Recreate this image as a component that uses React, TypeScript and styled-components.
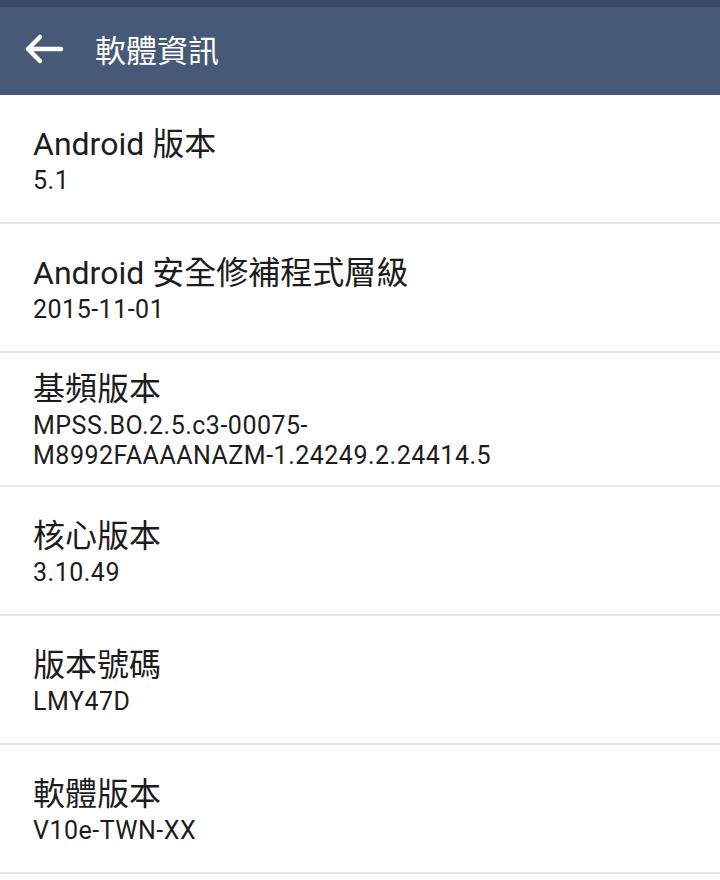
import React from "react";
import styled, { createGlobalStyle } from "styled-components";

const Global = createGlobalStyle`
  html, body { margin: 0; padding: 0; background: #ffffff; }
  body { font-family: Roboto, "Noto Sans CJK TC", sans-serif; }
`;

const Screen = styled.div`
  width: 720px;
  min-height: 880px;
  background: #ffffff;
  display: flex;
  flex-direction: column;
`;

const StatusStrip = styled.div`
  height: 7px;
  background: #3c4b63;
`;

const Toolbar = styled.header`
  height: 88px;
  background: #465977;
  display: flex;
  align-items: center;
  padding-left: 24px;
  padding-bottom: 5px;
  gap: 31px;
  box-sizing: border-box;
`;

const BackButton = styled.div`
  width: 40px;
  height: 40px;
  display: flex;
  align-items: center;
  justify-content: center;
`;

const ToolbarTitle = styled.h1`
  margin: 0;
  font-family: Roboto, "Noto Sans CJK TC", sans-serif;
  font-weight: 400;
  font-size: 31px;
  color: #ffffff;
`;

const List = styled.div`
  display: flex;
  flex-direction: column;
`;

const Row = styled.div`
  min-height: 129px;
  box-sizing: border-box;
  padding: 14px 33px;
  border-bottom: 2px solid #e8e8e8;
  display: flex;
  flex-direction: column;
  justify-content: center;
`;

const Title = styled.div`
  font-family: Roboto, "Noto Sans CJK TC", sans-serif;
  font-size: 32px;
  line-height: 44px;
  color: #1c1c1c;
`;

const Value = styled.div`
  font-family: Roboto, "Noto Sans CJK TC", sans-serif;
  font-size: 25px;
  line-height: 30px;
  letter-spacing: 0.5px;
  color: #1c1c1c;
`;

const items: { title: string; value: string[] }[] = [
  { title: "Android 版本", value: ["5.1"] },
  { title: "Android 安全修補程式層級", value: ["2015-11-01"] },
  { title: "基頻版本", value: ["MPSS.BO.2.5.c3-00075-", "M8992FAAAANAZM-1.24249.2.24414.5"] },
  { title: "核心版本", value: ["3.10.49"] },
  { title: "版本號碼", value: ["LMY47D"] },
  { title: "軟體版本", value: ["V10e-TWN-XX"] },
];

export default function App() {
  return (
    <>
      <Global />
      <Screen>
        <StatusStrip />
        <Toolbar>
          <BackButton>
            <svg width="40" height="32" viewBox="0 0 40 32" fill="none">
              <path d="M37 16H5M16 4L4 16l12 12" stroke="#ffffff" strokeWidth="4.5" strokeLinecap="round" strokeLinejoin="round" />
            </svg>
          </BackButton>
          <ToolbarTitle>軟體資訊</ToolbarTitle>
        </Toolbar>
        <List>
          {items.map((it) => (
            <Row key={it.title}>
              <Title>{it.title}</Title>
              {it.value.map((v) => (
                <Value key={v}>{v}</Value>
              ))}
            </Row>
          ))}
        </List>
      </Screen>
    </>
  );
}
